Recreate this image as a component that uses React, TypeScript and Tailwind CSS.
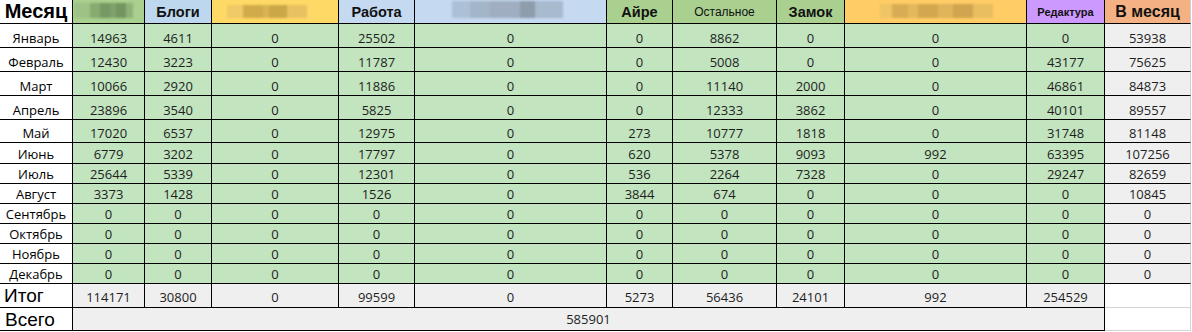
import React from "react";

const G =
  "grid grid-cols-[73px_72px_67px_127px_76px_192px_66px_104px_68px_182px_78px_86px]";
const NUM = "font-['Open_Sans',sans-serif] text-[13px] leading-none text-[#1e1e1e]";
const HB = "font-['Liberation_Sans',Arial,sans-serif] font-bold leading-none text-[#111]";
const GREEN = "bg-[#c2e4bf]";
const GRAY = "bg-[#efefef]";

type Block = [number, string];

function Mosaic({ blocks, h }: { blocks: Block[]; h: string }) {
  return (
    <div className={`flex blur-[1px] ${h}`}>
      {blocks.map(([w, c], i) => (
        <div key={i} style={{ width: w, background: c }} className="h-full" />
      ))}
    </div>
  );
}

const rows: (string | number)[][] = [
  ["Январь", 14963, 4611, 0, 25502, 0, 0, 8862, 0, 0, 0, 53938],
  ["Февраль", 12430, 3223, 0, 11787, 0, 0, 5008, 0, 0, 43177, 75625],
  ["Март", 10066, 2920, 0, 11886, 0, 0, 11140, 2000, 0, 46861, 84873],
  ["Апрель", 23896, 3540, 0, 5825, 0, 0, 12333, 3862, 0, 40101, 89557],
  ["Май", 17020, 6537, 0, 12975, 0, 273, 10777, 1818, 0, 31748, 81148],
  ["Июнь", 6779, 3202, 0, 17797, 0, 620, 5378, 9093, 992, 63395, 107256],
  ["Июль", 25644, 5339, 0, 12301, 0, 536, 2264, 7328, 0, 29247, 82659],
  ["Август", 3373, 1428, 0, 1526, 0, 3844, 674, 0, 0, 0, 10845],
  ["Сентябрь", 0, 0, 0, 0, 0, 0, 0, 0, 0, 0, 0],
  ["Октябрь", 0, 0, 0, 0, 0, 0, 0, 0, 0, 0, 0],
  ["Ноябрь", 0, 0, 0, 0, 0, 0, 0, 0, 0, 0, 0],
  ["Декабрь", 0, 0, 0, 0, 0, 0, 0, 0, 0, 0, 0],
];

const rowH = [
  "h-[24px]",
  "h-[24px]",
  "h-[24px]",
  "h-[24px]",
  "h-[23px]",
  "h-[21px]",
  "h-[20px]",
  "h-[20px]",
  "h-[20px]",
  "h-[20px]",
  "h-[20px]",
  "h-[20px]",
];

const totals = [114171, 30800, 0, 99599, 0, 5273, 56436, 24101, 992, 254529];

const cell = "border-r border-b border-black flex justify-center items-end";

export default function App() {
  return (
    <div className="w-[1192px] h-[332px] bg-white overflow-hidden">
      {/* header */}
      <div className={`${G} h-[24px]`}>
        <div className={`${cell} bg-white pb-[2px]`}>
          <span className={`${HB} text-[20px] text-black`}>Месяц</span>
        </div>
        <div className="border-r border-b border-black bg-[#a9d08e] flex items-start pt-[3px] pl-[1px]">
          <Mosaic
            h="h-[15px]"
            blocks={[
              [16, "#9cc285"],
              [10, "#86ab70"],
              [10, "#769862"],
              [6, "#7fa26a"],
              [10, "#73945f"],
              [7, "#8db277"],
            ]}
          />
        </div>
        <div className={`${cell} bg-[#bdd7ee] pb-[4px]`}>
          <span className={`${HB} text-[14.5px]`}>Блоги</span>
        </div>
        <div className="border-r border-b border-black bg-[#ffd966] flex items-start pt-[5px] pl-[15px]">
          <Mosaic
            h="h-[13px]"
            blocks={[
              [16, "#efca66"],
              [20, "#d1ab4a"],
              [6, "#d9b454"],
              [18, "#cca748"],
              [20, "#e8c262"],
            ]}
          />
        </div>
        <div className={`${cell} bg-[#c5d9f1] pb-[4px]`}>
          <span className={`${HB} text-[14.5px]`}>Работа</span>
        </div>
        <div className="border-r border-b border-black bg-[#c5d9f1] flex items-start pt-[1px] pl-[37px]">
          <Mosaic
            h="h-[17px]"
            blocks={[
              [18, "#adc1d6"],
              [20, "#a3b5c8"],
              [30, "#9fafc1"],
              [15, "#8e9cac"],
              [28, "#a8bace"],
            ]}
          />
        </div>
        <div className={`${cell} bg-[#a9d08e] pb-[4px]`}>
          <span className={`${HB} text-[14.5px]`}>Айре</span>
        </div>
        <div className={`${cell} bg-[#a9d08e] pb-[5px]`}>
          <span className="font-['Liberation_Sans',Arial,sans-serif] text-[12px] leading-none text-[#111]">
            Остальное
          </span>
        </div>
        <div className={`${cell} bg-[#a9d08e] pb-[4px]`}>
          <span className={`${HB} text-[14.5px]`}>Замок</span>
        </div>
        <div className="border-r border-b border-black bg-[#ffcc66] flex items-start pt-[4px] pl-[35px]">
          <Mosaic
            h="h-[14px]"
            blocks={[
              [12, "#f0c364"],
              [16, "#d8ac54"],
              [10, "#e3b85c"],
              [20, "#d3a750"],
              [15, "#dfb45a"],
              [20, "#d1a54f"],
              [20, "#e9be60"],
            ]}
          />
        </div>
        <div className={`${cell} bg-[#cc99ff] pb-[5px]`}>
          <span className={`${HB} text-[11px]`}>Редактура</span>
        </div>
        <div className="border-r border-b border-r-[#d0d0d0] border-b-black flex justify-center items-end bg-[#f4b183] pb-[3px]">
          <span className={`${HB} text-[16px]`}>В месяц</span>
        </div>
      </div>

      {rows.map((r, ri) => (
        <div key={ri} className={`${G} ${rowH[ri]}`}>
          {r.map((v, ci) => {
            if (ci === 0)
              return (
                <div key={ci} className={`${cell} bg-white pb-[2px]`}>
                  <span className={`${NUM} text-black`}>{v}</span>
                </div>
              );
            if (ci === 11)
              return (
                <div
                  key={ci}
                  className={`border-r border-b border-r-[#d0d0d0] border-b-black flex justify-center items-end pb-[2px] ${GRAY}`}
                >
                  <span className={NUM}>{v}</span>
                </div>
              );
            return (
              <div key={ci} className={`${cell} ${GREEN} pb-[2px]`}>
                <span className={NUM}>{v}</span>
              </div>
            );
          })}
        </div>
      ))}

      {/* Итог */}
      <div className={`${G} h-[24px]`}>
        <div className="border-r border-b border-black bg-white flex items-end pl-[4px] pb-[2px]">
          <span className="font-['Liberation_Sans',Arial,sans-serif] text-[19px] leading-none text-black">
            Итог
          </span>
        </div>
        {totals.map((t, i) => (
          <div key={i} className={`${cell} ${GRAY} pb-[3px]`}>
            <span className={NUM}>{t}</span>
          </div>
        ))}
        <div className="border-r border-b border-[#d4d4d4] bg-white" />
      </div>

      {/* Всего */}
      <div className={`${G} h-[23px]`}>
        <div className="border-r border-b border-black bg-white flex items-end pl-[5px] pb-[1px]">
          <span className="font-['Liberation_Sans',Arial,sans-serif] text-[19px] leading-none text-black">
            Всего
          </span>
        </div>
        <div className={`col-span-10 ${cell} ${GRAY} pb-[4px]`}>
          <span className={NUM}>585901</span>
        </div>
        <div className="border-r border-b border-[#d4d4d4] bg-white" />
      </div>
    </div>
  );
}
